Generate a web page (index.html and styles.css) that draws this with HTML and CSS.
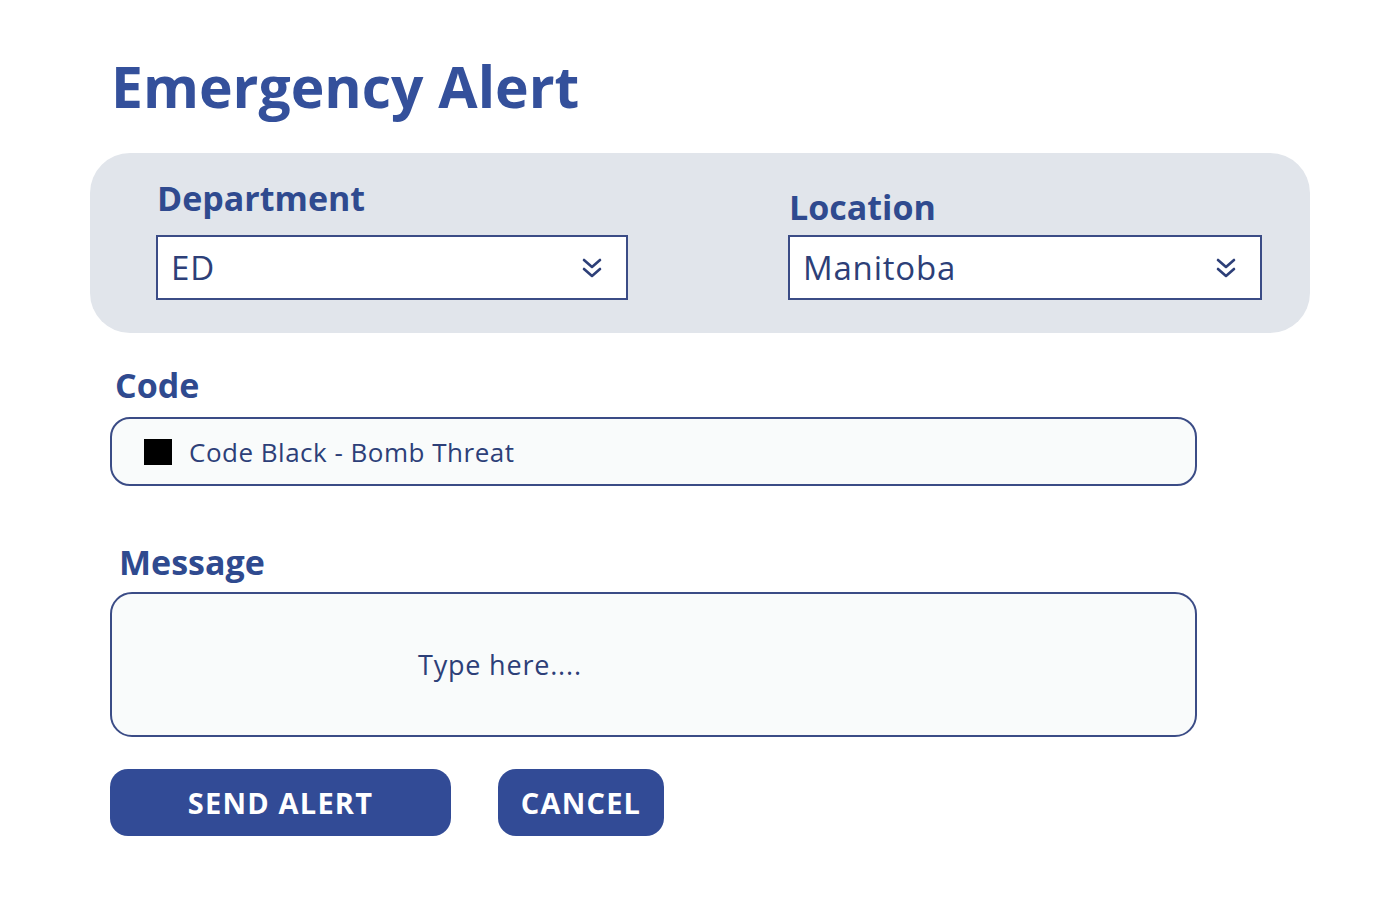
FILE: index.html
```html
<!DOCTYPE html>
<html lang="en">
<head>
<meta charset="utf-8">
<title>Emergency Alert</title>
<link rel="stylesheet" href="styles.css">
</head>
<body>
<main class="page">
  <h1 class="title">Emergency Alert</h1>

  <section class="panel">
    <div class="field">
      <label class="field-label">Department</label>
      <div class="select">
        <span class="select-value">ED</span>
        <svg class="chev" viewBox="0 0 20 22" width="20" height="22" aria-hidden="true">
          <polyline points="2,3 10,10 18,3" />
          <polyline points="2,12 10,19 18,12" />
        </svg>
      </div>
    </div>
    <div class="field field-loc">
      <label class="field-label">Location</label>
      <div class="select">
        <span class="select-value">Manitoba</span>
        <svg class="chev" viewBox="0 0 20 22" width="20" height="22" aria-hidden="true">
          <polyline points="2,3 10,10 18,3" />
          <polyline points="2,12 10,19 18,12" />
        </svg>
      </div>
    </div>
  </section>

  <section class="form">
    <label class="form-label code-label">Code</label>
    <div class="code-box">
      <span class="swatch"></span>
      <span class="code-text">Code Black - Bomb Threat</span>
    </div>

    <label class="form-label msg-label">Message</label>
    <div class="msg-box">
      <span class="placeholder">Type here....</span>
    </div>

    <div class="actions">
      <button class="btn btn-send">SEND ALERT</button>
      <button class="btn btn-cancel">CANCEL</button>
    </div>
  </section>
</main>
</body>
</html>
```

FILE: styles.css
```css
* { box-sizing: border-box; }

html, body {
  margin: 0;
  padding: 0;
  background: #ffffff;
}

body {
  font-family: "Open Sans", "Noto Sans", sans-serif;
  color: #2f4a8f;
}

.page {
  width: 1220px;
  margin-left: 90px;
  padding-top: 46px;
}

.title {
  margin: 0 0 0 21px;
  font-size: 57px;
  line-height: 80px;
  font-weight: 700;
  color: #34509b;
  letter-spacing: 0;
}

.panel {
  margin-top: 27px;
  height: 180px;
  background: #e1e5eb;
  border-radius: 40px;
  padding: 0 48px 33px 66px;
  display: grid;
  grid-template-columns: 472px 474px;
  column-gap: 160px;
  align-items: end;
}

.field {
  display: flex;
  flex-direction: column;
}

.field-label {
  font-size: 34px;
  line-height: 40px;
  font-weight: 700;
  color: #2f4a8f;
  margin-left: 1px;
  margin-bottom: 17px;
}

.field-loc .field-label {
  margin-bottom: 8px;
}

.select {
  height: 65px;
  background: #ffffff;
  border: 2px solid #3b4c86;
  display: flex;
  align-items: center;
  justify-content: space-between;
  padding: 0 24px 0 13px;
}

.select-value {
  font-size: 33px;
  font-weight: 400;
  letter-spacing: 0.8px;
  color: #2d3f78;
}

.chev {
  fill: none;
  stroke: #2d3f78;
  stroke-width: 2.6;
  stroke-linecap: round;
  stroke-linejoin: round;
}

.form {
  margin-left: 20px;
  width: 1087px;
}

.form-label {
  display: block;
  font-size: 34px;
  line-height: 40px;
  font-weight: 700;
  color: #2f4a8f;
}

.code-label {
  margin-top: 32px;
  margin-left: 5px;
}

.code-box {
  margin-top: 12px;
  height: 69px;
  border: 2.5px solid #3b4c86;
  border-radius: 20px;
  background: #f9fbfb;
  display: flex;
  align-items: center;
  padding-left: 32px;
}

.swatch {
  width: 28px;
  height: 26px;
  background: #000000;
  margin-right: 17px;
}

.code-text {
  font-size: 26px;
  letter-spacing: 0.5px;
  color: #2d3f78;
}

.msg-label {
  margin-top: 56px;
  margin-left: 9px;
}

.msg-box {
  margin-top: 10px;
  height: 145px;
  border: 2.5px solid #3b4c86;
  border-radius: 22px;
  background: #f9fbfb;
  display: flex;
  align-items: center;
  padding-left: 306px;
}

.placeholder {
  font-size: 27px;
  letter-spacing: 0.8px;
  color: #2d3f78;
}

.actions {
  margin-top: 32px;
  display: flex;
  gap: 47px;
}

.btn {
  height: 67px;
  border: none;
  border-radius: 18px;
  background: #324b96;
  color: #ffffff;
  font-family: "Open Sans", "Noto Sans", sans-serif;
  font-size: 29px;
  font-weight: 700;
  letter-spacing: 1.2px;
  padding: 0;
  cursor: pointer;
}

.btn-send { width: 341px; }
.btn-cancel { width: 166px; }
```
